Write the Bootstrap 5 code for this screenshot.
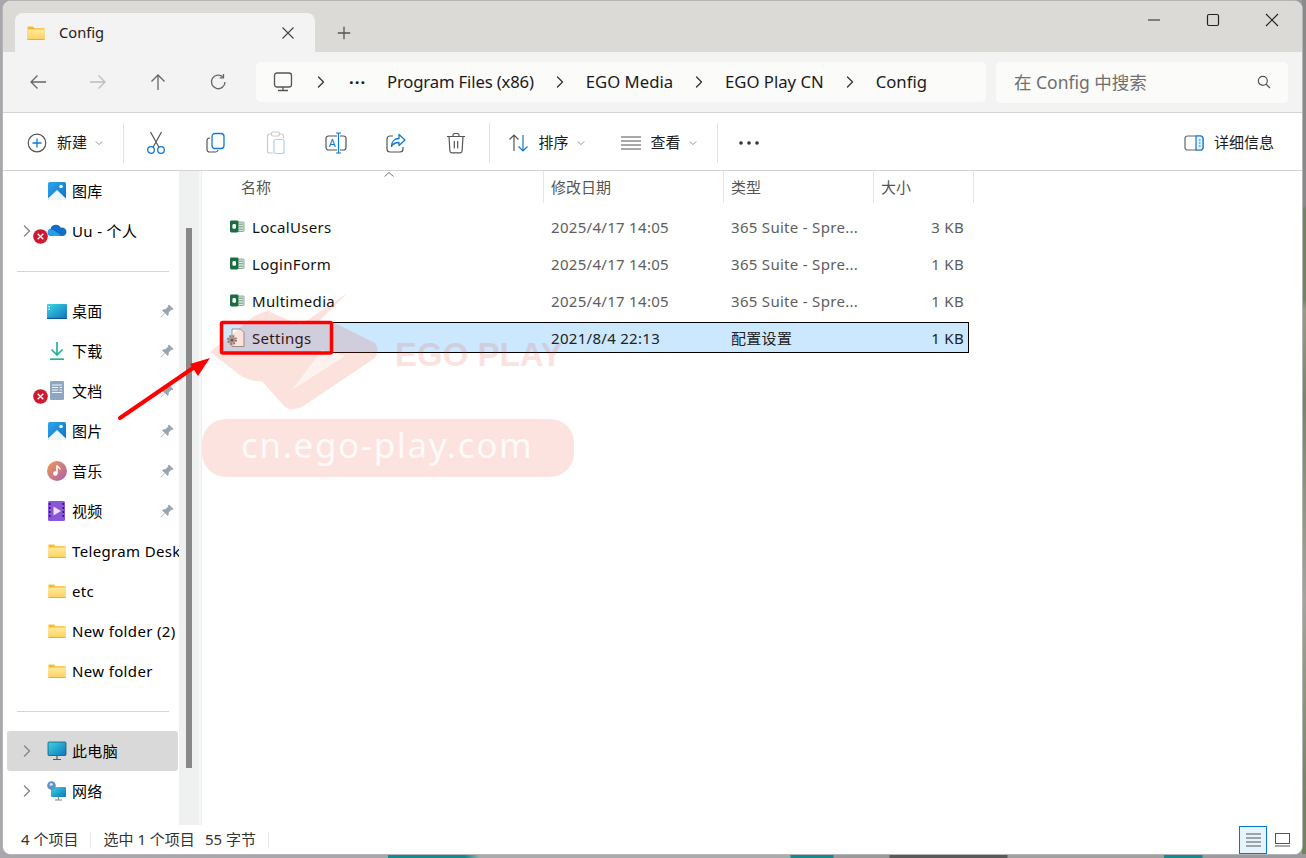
<!DOCTYPE html>
<html lang="zh-CN">
<head>
<meta charset="utf-8">
<title>Config</title>
<link href="https://cdn.jsdelivr.net/npm/bootstrap@5.3.0/dist/css/bootstrap.min.css" rel="stylesheet">
<style>
html,body{height:100%;margin:0}
body{width:1306px;height:858px;overflow:hidden;position:relative;padding:1px 4px 4px 3px;
  font-family:"Noto Sans","Noto Sans CJK SC",sans-serif;font-size:15px;color:#111;
  background:linear-gradient(90deg,#a9a6ad 0,#a9a6ad 388px,#128a94 388px,#128a94 465px,#a8acae 480px,#a8acae 790px,#128a94 791px,#128a94 833px,#9a9a9a 834px,#9a9a9a 889px,#5a5a5a 890px,#5a5a5a 1007px,#a0a0a0 1008px,#a0a0a0 1164px,#128a94 1164px,#128a94 1202px,#9a9aa0 1203px);}
.strip{position:absolute;right:0;top:0;bottom:4px;width:4px;background:linear-gradient(180deg,#8a8a8a 0,#8a8a8a 205px,#6f8560 210px,#6f8560 300px,#9a9a86 310px,#76866a 400px,#a5a595 600px,#6f8560 800px)}
.win{height:853px;position:relative;background:#fff;border-radius:8px;overflow:hidden;display:flex;flex-direction:column;box-shadow:0 0 0 1px #b5b5b5}
.titlerow{height:51px;flex:none;background:#dbdad7;position:relative;display:flex;align-items:flex-end;padding-left:12px}
.tabx{width:300px;height:39px;background:#f3f3f3;border-radius:8px 8px 0 0;display:flex;align-items:center;padding:0 20px 0 11px;font-size:14.7px;color:#222}
.tabx .tname{margin-left:13px;flex:1}
.addtab{width:58px;height:39px;display:flex;align-items:center;justify-content:center}
.wctl{margin-left:auto;display:flex;align-self:flex-start;height:38px;padding-right:1px}
.wctl span{width:59px;display:flex;align-items:center;justify-content:center}
.addrrow{height:61px;flex:none;background:#f3f3f3;border-bottom:1px solid #d3d3d0;display:flex;align-items:center;padding-left:5px}
.navb{width:60px;height:40px;display:flex;align-items:center;justify-content:center}
.crumb{margin-left:8px;width:730px;height:40px;background:#fbfbfa;border-radius:5px;display:flex;align-items:center;font-size:16.7px;color:#1a1a1a;padding-left:17px}
.crumb .chv{width:52px;display:flex;justify-content:center}
.crumb .chv.first{width:56px}
.crumb .dots{width:38px;letter-spacing:1px;font-weight:700}
.crumb .pfx{letter-spacing:-.16px}
.searchbox{margin-left:10px;width:292px;height:41px;background:#fbfbfa;border-radius:5px;display:flex;align-items:center;justify-content:space-between;padding:0 17px 0 18px;font-size:17.5px;color:#6f6f6f}
.toolrow{height:58px;flex:none;background:#fff;border-bottom:1px solid #d3d3d3;display:flex;align-items:center;padding:2px 0 0 24px;font-size:15px;color:#1c1c1c}
.tbtn{width:60px;height:40px;display:flex;align-items:center;justify-content:center;flex:none}
.tbtn.lead1{margin-left:1.500px}
.tsep{width:1px;height:40px;background:#e3e3e3;flex:none}
.tlab{display:flex;align-items:center;flex:none;height:40px}
.tlab .tx{margin-left:10px}
.mainrow{flex:1;min-height:0;display:flex}
.sidepane{width:176px;flex:none;overflow:hidden;font-size:15px;letter-spacing:.35px;color:#000}
.srow{height:40px;display:flex;align-items:center;position:relative;white-space:nowrap;margin:0 1px 0 4px}
.srow.active{background:#d9d9d9;border-radius:3px}
.srow .cv{width:15px;margin-left:12px;flex:none;display:flex;justify-content:center}
.srow .cv.none{visibility:hidden}
.srow .ico{width:20px;height:20px;margin-left:13px;margin-right:5px;flex:none;display:block}
.srow .pn{position:absolute;right:4px;top:13px}
.srow .nm{flex:none}
.hrline{height:40px;display:flex;align-items:center;padding:0 10px 0 14px}
.hrline i{display:block;height:1px;width:100%;background:#d4d4d4}
.errb{position:absolute;left:26px;top:18px;width:15px;height:15px}
.sbar{width:20px;flex:none;background:#eff0f0;position:relative}
.sthumb{position:absolute;left:7px;top:57px;width:6px;height:540px;background:#888}
.sgap{width:2px;flex:none;background:#f7f7f7;border-right:1px solid #eee;box-sizing:content-box}
.filepane{flex:1;min-width:0;background:#fff}
.hdrrow{height:32px;display:flex;font-size:15px;color:#555;line-height:32px}
.hcol{border-right:1px solid #e5e5e5;padding-left:7px;flex:none;height:32px;position:relative}
.hcol.first{width:342px;padding-left:39px}
.sortup{position:absolute;left:182px;top:1px}
.frows{margin:8px 0 0 18px;width:749px;display:flex;flex-direction:column;gap:6px}
.frow{height:31px;display:flex;align-items:center;border:1px solid transparent;color:#5e5e5e;font-size:15px;letter-spacing:.3px;padding-top:1px}
.frow.sel{background:#cce8ff;border-color:#000;color:#222}
.fname{width:322px;flex:none;display:flex;align-items:center;color:#111;padding-left:8px}
.fname svg{margin-right:7px;flex:none}
.fname svg.gearfile{margin-left:-3px}
.fdate{width:180px;flex:none;padding-left:8px}
.ftype{width:150px;flex:none;padding-left:8px}
.fsize{width:95px;flex:none;text-align:right;padding-right:4px}
.statusrow{height:29px;flex:none;display:flex;align-items:center;font-size:15px;color:#333;padding-left:18px;position:relative;background:#fff}
.stsep{width:1px;height:16px;background:#e6e6e6;margin:0 12px}
.stbytes{margin-left:10px}
.viewbtns{margin-left:auto;display:flex;align-items:center;height:28px;padding-right:12px}
.vb1{width:28px;height:28px;border:1px solid #0078d4;background:#e5f3fb;display:flex;align-items:center;justify-content:center;margin-right:8px}
.overlay{position:absolute;left:0;top:0;width:1306px;height:858px;pointer-events:none}
.symhold{position:absolute;width:0;height:0}
</style>
</head>
<body>
<svg class="symhold" aria-hidden="true">
  <defs>
    <linearGradient id="gf" x1="0" y1="0" x2="0" y2="1"><stop offset="0" stop-color="#ffe9a0"/><stop offset="1" stop-color="#fcd15b"/></linearGradient>
    <linearGradient id="gm" x1="0" y1="0" x2="1" y2="1"><stop offset="0" stop-color="#f19a4a"/><stop offset="1" stop-color="#a85fb8"/></linearGradient>
    <linearGradient id="gd" x1="0" y1="0" x2="1" y2="1"><stop offset="0" stop-color="#3bd6e4"/><stop offset="1" stop-color="#0f74b8"/></linearGradient>
    <linearGradient id="gb" x1="0" y1="0" x2="1" y2="1"><stop offset="0" stop-color="#2ea6ee"/><stop offset="1" stop-color="#0b6fc4"/></linearGradient>
  </defs>
  <symbol id="i-folder" viewBox="0 0 20 20"><path d="M1.500 3.500h5.200l1.800 1.800h10v11a.8.8 0 0 1-.8.8H2.200a.8.8 0 0 1-.7-.8z" fill="#fbb92a"/><path d="M1.500 6.500h17v9.700a.8.8 0 0 1-.8.8H2.200a.8.8 0 0 1-.7-.8z" fill="url(#gf)"/><path d="M1.500 15.900h17v.5a.6.6 0 0 1-.6.6H2.100a.6.6 0 0 1-.6-.6z" fill="#f5ac1c"/></symbol>
  <symbol id="i-pic" viewBox="0 0 20 20"><rect x="1" y="1" width="18" height="18" rx="1.600" fill="url(#gb)"/><path d="M1 17.500 10 9l9 8.500V18a1 1 0 0 1-1 1H2a1 1 0 0 1-1-1z" fill="#eef6fc"/><circle cx="14" cy="5.500" r="1.800" fill="#fff"/></symbol>
  <symbol id="i-pin" viewBox="0 0 14 14"><path d="M9 .5 13.500 5l-1 1-1-.2-2.800 2.800v2.200l-1.100 1.100L5 9.300 1 13.500.5 13l4.200-4L2.100 6.400l1.100-1.100h2.200l2.800-2.800L8 1.500z" fill="#9aa5b0"/></symbol>
  <symbol id="i-chev" viewBox="0 0 10 14"><path d="M2.500 2 7.500 7l-5 5" fill="none" stroke="#8a8a8a" stroke-width="1.500" stroke-linecap="round" stroke-linejoin="round"/></symbol>
  <symbol id="i-chev2" viewBox="0 0 10 14"><path d="M2.500 2 7.500 7l-5 5" fill="none" stroke="#333" stroke-width="1.300" stroke-linecap="round" stroke-linejoin="round"/></symbol>
  <symbol id="i-down" viewBox="0 0 10 6"><path d="M1 1l4 4 4-4" fill="none" stroke="#777" stroke-width="1"/></symbol>
  <symbol id="i-xls" viewBox="0 0 16 16"><rect x="7" y="3" width="8" height="9.500" rx=".8" fill="#d8e6dd" stroke="#6f9c82" stroke-width=".8"/><path d="M10 5.200h4M10 7.700h4M10 10.200h4" stroke="#6f9c82" stroke-width="1"/><rect x="1" y="1.500" width="8.500" height="12" rx="1.400" fill="#1a6d40"/><rect x="3.400" y="5" width="3.600" height="4.800" rx="1.400" fill="#fff"/></symbol>
  <symbol id="i-err" viewBox="0 0 15 15"><circle cx="7.500" cy="7.500" r="7.300" fill="#cf1930"/><path d="m4.700 4.700 5.600 5.600M10.300 4.700l-5.600 5.600" stroke="#fff" stroke-width="1.300"/></symbol>
</svg>
<div class="strip"></div>
<div class="win">
  <div class="titlerow">
    <div class="tabx">
      <svg width="20" height="20"><use href="#i-folder"/></svg>
      <span class="tname">Config</span>
      <svg width="14" height="14" viewBox="0 0 14 14"><path d="M1.500 1.500l11 11M12.500 1.500l-11 11" stroke="#444" stroke-width="1.100"/></svg>
    </div>
    <div class="addtab"><svg width="14" height="14" viewBox="0 0 14 14"><path d="M7 .8v12.400M.8 7h12.400" stroke="#555" stroke-width="1.300"/></svg></div>
    <div class="wctl">
      <span><svg width="14" height="14" viewBox="0 0 14 14"><path d="M1 7h12" stroke="#222" stroke-width="1.100"/></svg></span>
      <span><svg width="14" height="14" viewBox="0 0 14 14"><rect x="1.500" y="1.500" width="11" height="11" rx="1.500" fill="none" stroke="#222" stroke-width="1.200"/></svg></span>
      <span><svg width="14" height="14" viewBox="0 0 14 14"><path d="M1 1l12 12M13 1 1 13" stroke="#222" stroke-width="1.100"/></svg></span>
    </div>
  </div>
  <div class="addrrow">
    <div class="navb"><svg width="18" height="18" viewBox="0 0 18 18"><path d="M17 9H2M8.500 2.500 2 9l6.500 6.500" fill="none" stroke="#666" stroke-width="1.300"/></svg></div>
    <div class="navb"><svg width="18" height="18" viewBox="0 0 18 18"><path d="M1 9h15M9.500 2.500 16 9l-6.500 6.500" fill="none" stroke="#bdbdbd" stroke-width="1.300"/></svg></div>
    <div class="navb"><svg width="18" height="18" viewBox="0 0 18 18"><path d="M9 17V2M2.500 8.500 9 2l6.500 6.500" fill="none" stroke="#666" stroke-width="1.300"/></svg></div>
    <div class="navb"><svg width="18" height="18" viewBox="0 0 18 18"><path d="M14.200 4.300A6.800 6.800 0 1 0 16 9" fill="none" stroke="#666" stroke-width="1.300"/><path d="M14.500 1v3.800h-3.800" fill="none" stroke="#666" stroke-width="1.300"/></svg></div>
    <div class="crumb">
      <svg width="20" height="20" viewBox="0 0 20 20"><rect x="1.500" y="1" width="17" height="14" rx="2.500" fill="none" stroke="#555" stroke-width="1.300"/><path d="M5 18.500h10M10 15v3.500" stroke="#555" stroke-width="1.300"/></svg>
      <span class="chv first"><svg width="10" height="14"><use href="#i-chev2"/></svg></span>
      <span class="dots">···</span>
      <span class="pfx">Program Files (x86)</span>
      <span class="chv"><svg width="10" height="14"><use href="#i-chev2"/></svg></span>
      <span>EGO Media</span>
      <span class="chv"><svg width="10" height="14"><use href="#i-chev2"/></svg></span>
      <span>EGO Play CN</span>
      <span class="chv"><svg width="10" height="14"><use href="#i-chev2"/></svg></span>
      <span>Config</span>
    </div>
    <div class="searchbox">
      <span>在 Config 中搜索</span>
      <svg width="14" height="14" viewBox="0 0 14 14"><circle cx="5.800" cy="5.800" r="4.500" fill="none" stroke="#555" stroke-width="1.200"/><path d="m9 9 4 4" stroke="#555" stroke-width="1.300"/></svg>
    </div>
  </div>
  <div class="toolrow">
    <div class="tlab" style="width:96px">
      <svg width="20" height="20" viewBox="0 0 20 20"><circle cx="10" cy="10" r="8.800" fill="none" stroke="#555" stroke-width="1.200"/><path d="M10 5.500v9M5.500 10h9" stroke="#0f78d4" stroke-width="1.300"/></svg>
      <span class="tx">新建</span>
      <svg class="ms-2" width="8" height="6"><use href="#i-down"/></svg>
    </div>
    <div class="tsep"></div>
    <div class="tbtn lead1"><svg width="20" height="24" viewBox="0 0 20 24"><path d="M4.500 1 12.800 16M15.500 1 7.200 16" stroke="#555" stroke-width="1.200"/><circle cx="5" cy="19" r="3.300" fill="none" stroke="#0f78d4" stroke-width="1.300"/><circle cx="15" cy="19" r="3.300" fill="none" stroke="#0f78d4" stroke-width="1.300"/></svg></div>
    <div class="tbtn"><svg width="20" height="22" viewBox="0 0 20 22"><path d="M4 6H3.500A2.500 2.500 0 0 0 1 8.500v9A2.500 2.500 0 0 0 3.500 20h6A2.500 2.500 0 0 0 12 18" fill="none" stroke="#555" stroke-width="1.200"/><rect x="6" y="1.500" width="12" height="15" rx="3" fill="none" stroke="#0f78d4" stroke-width="1.300"/></svg></div>
    <div class="tbtn"><svg width="20" height="24" viewBox="0 0 20 24"><path d="M6 3H3.500A2 2 0 0 0 1.500 5v15a2 2 0 0 0 2 2H7M13 3h2.500a2 2 0 0 1 2 2v2" fill="none" stroke="#c9cbcd" stroke-width="1.200"/><rect x="5.500" y="1" width="8" height="4" rx="1.500" fill="none" stroke="#c9cbcd" stroke-width="1.200"/><rect x="8" y="8.500" width="10" height="14" rx="2" fill="none" stroke="#a9d2f2" stroke-width="1.200"/></svg></div>
    <div class="tbtn"><svg width="22" height="22" viewBox="0 0 22 22"><rect x="1" y="4" width="20" height="14" rx="2.500" fill="none" stroke="#555" stroke-width="1.200"/><rect x="12" y="2" width="3" height="18" fill="#fff"/><path d="M11 1h5M11 21h5M13.500 1v20" stroke="#0f78d4" stroke-width="1.200"/><text x="3.800" y="15" font-size="11" fill="#0f78d4" font-family="Noto Sans">A</text></svg></div>
    <div class="tbtn"><svg width="20" height="20" viewBox="0 0 20 20"><path d="M7 3H4a3 3 0 0 0-3 3v10a3 3 0 0 0 3 3h10a3 3 0 0 0 3-3v-2" fill="none" stroke="#555" stroke-width="1.200"/><path d="M13 1.500 19 7l-6 5.500V9.500c-3.500 0-6 1-7.500 4 0-5 3-8 7.500-8z" fill="none" stroke="#0f78d4" stroke-width="1.300" stroke-linejoin="round"/></svg></div>
    <div class="tbtn"><svg width="20" height="22" viewBox="0 0 20 22"><path d="M1 4.500h18M7 4.500V3a1.500 1.500 0 0 1 1.500-1.500h3A1.500 1.500 0 0 1 13 3v1.500M3 4.500l.9 14.500a2 2 0 0 0 2 1.800h8.200a2 2 0 0 0 2-1.800L17 4.500M8.300 9v7.500M11.700 9v7.500" fill="none" stroke="#555" stroke-width="1.200"/></svg></div>
    <div class="tsep" style="margin-left:3px"></div>
    <div class="tlab" style="margin-left:18px;width:209px;">
      <svg width="21" height="20" viewBox="0 0 20 20"><path d="M5.500 18V2M1 6.500 5.500 2 10 6.500" fill="none" stroke="#555" stroke-width="1.200"/><path d="M14.500 2v16M10 13.500l4.500 4.500 4.500-4.500" fill="none" stroke="#0f78d4" stroke-width="1.200"/></svg>
      <span class="tx">排序</span>
      <svg class="ms-2" width="8" height="6"><use href="#i-down"/></svg>
      <svg style="margin-left:36px" width="20" height="14" viewBox="0 0 20 14"><path d="M0 1h20M0 5h20M0 9h20M0 13h20" stroke="#555" stroke-width="1.100"/></svg>
      <span class="tx">查看</span>
      <svg class="ms-2" width="8" height="6"><use href="#i-down"/></svg>
    </div>
    <div class="tsep"></div>
    <div class="tlab" style="margin-left:20px"><svg width="22" height="6" viewBox="0 0 22 6"><circle cx="3" cy="3" r="1.800" fill="#333"/><circle cx="11" cy="3" r="1.800" fill="#333"/><circle cx="19" cy="3" r="1.800" fill="#333"/></svg></div>
    <div class="tlab ms-auto" style="margin-right:28px">
      <svg width="20" height="16" viewBox="0 0 20 16"><rect x="1" y="1" width="18" height="14" rx="2.500" fill="none" stroke="#666" stroke-width="1.200"/><path d="M12 1h4.500A2.500 2.500 0 0 1 19 3.500v9a2.500 2.500 0 0 1-2.500 2.500H12z" fill="#dff0fc" stroke="#0f78d4" stroke-width="1.200"/><path d="M15 5h1.500M15 8h1.500M15 11h1.500" stroke="#0f78d4" stroke-width="1.100"/></svg>
      <span class="tx">详细信息</span>
    </div>
  </div>
  <div class="mainrow">
    <div class="sidepane">
      <div class="srow"><span class="cv none"></span><svg class="ico"><use href="#i-pic"/></svg><span class="nm">图库</span></div>
      <div class="srow"><span class="cv"><svg width="10" height="14"><use href="#i-chev"/></svg></span>
        <svg class="ico" viewBox="0 0 20 20"><path d="M4 15a3.500 3.500 0 0 1-.5-6.900A5.500 5.500 0 0 1 13.800 6.800 4.300 4.300 0 0 1 19.500 11c0 2.300-1.700 4-4 4z" fill="#0f6fc8"/><path d="M4 15a3.500 3.500 0 0 1-1-6.800c3 .2 5 1.800 7 3.300l3 2.300c.4.600.4 1.200 0 1.200z" fill="#2b9ee8"/></svg>
        <span class="nm">Uu - 个人</span>
        <svg class="errb"><use href="#i-err"/></svg></div>
      <div class="hrline"><i></i></div>
      <div class="srow"><span class="cv none"></span><svg class="ico" viewBox="0 0 20 20"><rect x="0" y="3" width="20" height="15" rx="1" fill="url(#gd)"/><path d="M0 16.800h20V18H0z" fill="#0c5b94"/><path d="M1.500 5h1.500v1.200H1.500zM1.500 7.800h1.500V9H1.500z" fill="#fff"/></svg><span class="nm">桌面</span><svg class="pn" width="14" height="14"><use href="#i-pin"/></svg></div>
      <div class="srow"><span class="cv none"></span><svg class="ico" viewBox="0 0 20 20"><path d="M10 1v13M4.500 8.500 10 14l5.500-5.500" fill="none" stroke="#1fb39a" stroke-width="1.700"/><path d="M3 18.200h14" stroke="#1fb39a" stroke-width="1.700"/></svg><span class="nm">下载</span><svg class="pn" width="14" height="14"><use href="#i-pin"/></svg></div>
      <div class="srow"><span class="cv none"></span><svg class="ico" viewBox="0 0 20 20"><rect x="3" y="0" width="14" height="19" rx="1.200" fill="#8da6c3"/><path d="M5 4h10M5 6.500h6M12.500 6.500H15M5 9h6M12.500 9H15M5 11.500h10" stroke="#eef3f8" stroke-width="1"/></svg><span class="nm">文档</span><svg class="pn" width="14" height="14"><use href="#i-pin"/></svg><svg class="errb"><use href="#i-err"/></svg></div>
      <div class="srow"><span class="cv none"></span><svg class="ico"><use href="#i-pic"/></svg><span class="nm">图片</span><svg class="pn" width="14" height="14"><use href="#i-pin"/></svg></div>
      <div class="srow"><span class="cv none"></span><svg class="ico" viewBox="0 0 20 20"><circle cx="10" cy="10" r="10" fill="url(#gm)"/><path d="M10 4.500v8" stroke="#fff" stroke-width="1.600"/><circle cx="8.300" cy="12.500" r="2.300" fill="#fff"/><path d="M10 4.500c.5 2 3 2 3 4" stroke="#fff" stroke-width="1.500" fill="none"/></svg><span class="nm">音乐</span><svg class="pn" width="14" height="14"><use href="#i-pin"/></svg></div>
      <div class="srow"><span class="cv none"></span><svg class="ico" viewBox="0 0 20 20"><rect x="1" y="0" width="17" height="20" rx="1.500" fill="#8a55d8"/><path d="M2 2h1.500v2H2zM2 6h1.500v2H2zM2 10h1.500v2H2zM2 14h1.500v2H2zM15.500 2H17v2h-1.500zM15.500 6H17v2h-1.500zM15.500 10H17v2h-1.500zM15.500 14H17v2h-1.500z" fill="#2b1a55"/><path d="M6.500 5.500 14 10l-7.500 4.500z" fill="#ecdfff"/></svg><span class="nm">视频</span><svg class="pn" width="14" height="14"><use href="#i-pin"/></svg></div>
      <div class="srow"><span class="cv none"></span><svg class="ico"><use href="#i-folder"/></svg><span class="nm">Telegram Desktop</span></div>
      <div class="srow"><span class="cv none"></span><svg class="ico"><use href="#i-folder"/></svg><span class="nm">etc</span></div>
      <div class="srow"><span class="cv none"></span><svg class="ico"><use href="#i-folder"/></svg><span class="nm">New folder (2)</span></div>
      <div class="srow"><span class="cv none"></span><svg class="ico"><use href="#i-folder"/></svg><span class="nm">New folder</span></div>
      <div class="hrline"><i></i></div>
      <div class="srow active"><span class="cv"><svg width="10" height="14"><use href="#i-chev"/></svg></span><svg class="ico" viewBox="0 0 20 20"><rect x="1" y="1" width="18" height="13.500" rx="1" fill="url(#gd)" stroke="#155a78" stroke-width=".8"/><path d="M10 14.500v3.500M6 18.500h8" stroke="#4a5a66" stroke-width="1.200"/></svg><span class="nm">此电脑</span></div>
      <div class="srow"><span class="cv"><svg width="10" height="14"><use href="#i-chev"/></svg></span><svg class="ico" viewBox="0 0 20 20"><rect x="4" y="6" width="15" height="10" rx="1" fill="url(#gd)"/><path d="M11.500 16v2.500M8 19h7" stroke="#7a8a96" stroke-width="1.200"/><circle cx="4.500" cy="4.500" r="4.300" fill="#5e93c9"/><path d="M3 2.500c1.500-.5 2.500 0 3 1.200-1 1-2.500 1.500-3.500.5z" fill="#dce9f6"/></svg><span class="nm">网络</span></div>
    </div>
    <div class="sbar"><div class="sthumb"></div></div>
    <div class="sgap"></div>
    <div class="filepane">
      <div class="hdrrow">
        <div class="hcol first">名称<svg class="sortup" width="10" height="5" viewBox="0 0 10 5"><path d="M.5 4.500 5 .5l4.500 4" fill="none" stroke="#777" stroke-width="1"/></svg></div>
        <div class="hcol" style="width:180px">修改日期</div>
        <div class="hcol" style="width:150px">类型</div>
        <div class="hcol" style="width:100px">大小</div>
      </div>
      <div class="frows">
        <div class="frow"><div class="fname"><svg width="16" height="16"><use href="#i-xls"/></svg>LocalUsers</div><div class="fdate">2025/4/17 14:05</div><div class="ftype">365 Suite - Spre...</div><div class="fsize">3 KB</div></div>
        <div class="frow"><div class="fname"><svg width="16" height="16"><use href="#i-xls"/></svg>LoginForm</div><div class="fdate">2025/4/17 14:05</div><div class="ftype">365 Suite - Spre...</div><div class="fsize">1 KB</div></div>
        <div class="frow"><div class="fname"><svg width="16" height="16"><use href="#i-xls"/></svg>Multimedia</div><div class="fdate">2025/4/17 14:05</div><div class="ftype">365 Suite - Spre...</div><div class="fsize">1 KB</div></div>
        <div class="frow sel"><div class="fname"><svg class="gearfile" width="19" height="20" viewBox="0 0 19 20"><path d="M6 1h8.500L18 4.500V18.500H6z" fill="#fff" stroke="#8a8a8a" stroke-width=".9"/><circle cx="6" cy="12" r="3.800" fill="#b5b5b5" stroke="#888" stroke-width="2.500" stroke-dasharray="1.600 1.400"/><circle cx="6" cy="12" r="1.600" fill="#555"/></svg>Settings</div><div class="fdate">2021/8/4 22:13</div><div class="ftype">配置设置</div><div class="fsize">1 KB</div></div>
      </div>
    </div>
  </div>
  <div class="statusrow">
    <span>4 个项目</span><span class="stsep"></span><span>选中 1 个项目</span><span class="stbytes">55 字节</span><span class="stsep"></span>
    <div class="viewbtns">
      <div class="vb1"><svg width="15" height="14" viewBox="0 0 15 14"><path d="M0 1h15M0 5h15M0 9h15M0 13h15" stroke="#555" stroke-width="1"/></svg></div>
      <svg width="15" height="14" viewBox="0 0 15 14"><rect x=".5" y=".5" width="14" height="10" fill="none" stroke="#555"/><path d="M0 13h15" stroke="#555"/></svg>
    </div>
  </div>
</div>
<svg class="overlay" viewBox="0 0 1306 858">
  <path d="M348 293 318 322H333L375 343Q380 350 375 358L302 407Q290 412 284 406L268 388 262 381Q250 382 240 375L210 352 240 328Q255 313 268 311L300 325Z" fill="#ec3a1c" opacity=".15"/>
  <path d="M292 390 322 350 345 356Z" fill="#fff" opacity=".55"/>
  <rect x="202" y="419" width="372" height="58" rx="24" fill="#ec3a1c" opacity=".14"/>
  <text x="395" y="366" font-family="Liberation Sans,sans-serif" font-weight="700" font-size="33" fill="#ec3a1c" opacity=".14">EGO PLAY</text>
  <text x="241" y="458" font-family="Noto Sans,sans-serif" font-size="35" fill="#fff" fill-opacity=".85" letter-spacing="1.600">cn.ego-play.com</text>
  <rect x="221.500" y="322.500" width="110" height="30.500" rx="1.500" fill="none" stroke="#f00" stroke-width="3.500"/>
  <path d="M120 418 196 366" stroke="#f00" stroke-width="4" stroke-linecap="round"/>
  <path d="M210 358 190 364 198 376z" fill="#f00"/>
</svg>
<script src="https://cdn.jsdelivr.net/npm/bootstrap@5.3.0/dist/js/bootstrap.bundle.min.js"></script>
</body>
</html>
